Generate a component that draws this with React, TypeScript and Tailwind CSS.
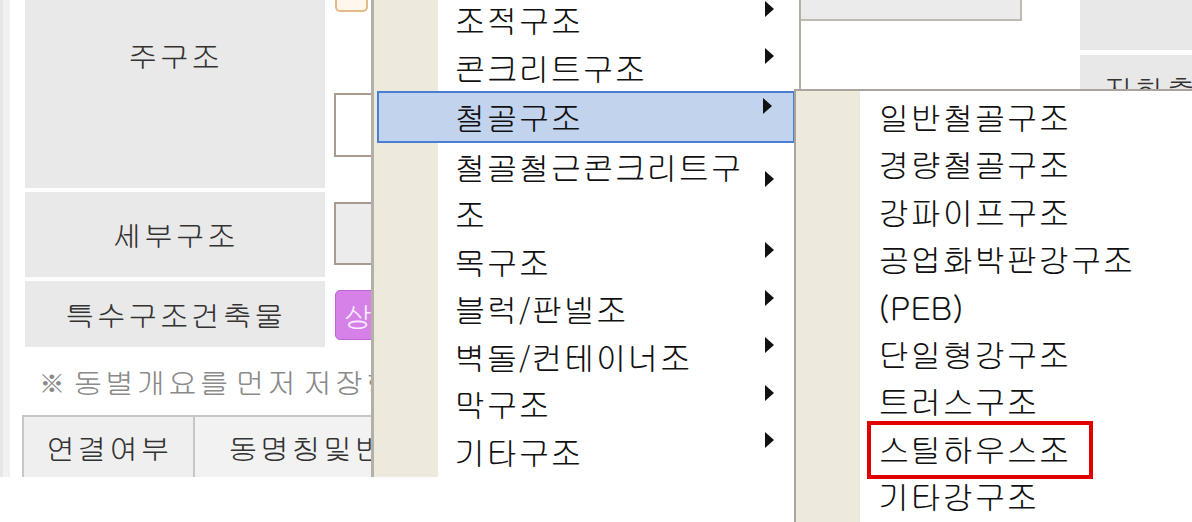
const font = "font-['Gulim','Noto_Sans_CJK_KR',sans-serif]";

const mainItems: { lines: string[]; active?: boolean }[] = [
  { lines: ['조적구조'] },
  { lines: ['콘크리트구조'] },
  { lines: ['철골구조'], active: true },
  { lines: ['철골철근콘크리트구', '조'] },
  { lines: ['목구조'] },
  { lines: ['블럭/판넬조'] },
  { lines: ['벽돌/컨테이너조'] },
  { lines: ['막구조'] },
  { lines: ['기타구조'] },
];

const subItems: { lines: string[]; marked?: boolean }[] = [
  { lines: ['일반철골구조'] },
  { lines: ['경량철골구조'] },
  { lines: ['강파이프구조'] },
  { lines: ['공업화박판강구조', '(PEB)'] },
  { lines: ['단일형강구조'] },
  { lines: ['트러스구조'] },
  { lines: ['스틸하우스조'], marked: true },
  { lines: ['기타강구조'] },
];

function Arrow() {
  return (
    <svg width="11" height="18" viewBox="0 0 11 18" className="mb-[22px] shrink-0">
      <path d="M1 1 L10 9 L1 17 Z" fill="#111" />
    </svg>
  );
}

export default function App() {
  return (
    <div className={`relative w-[1192px] h-[522px] overflow-hidden bg-white text-[#222] ${font}`}>
      {/* Background form (screenshot area) */}
      <div className="flex h-[477px] overflow-hidden">
        <div className="w-[10px] shrink-0 bg-[#f1f1f1] border-l-[3px] border-[#e6e6e6]" />
        <div className="ml-[12px] w-[400px] flex flex-col shrink-0">
          {/* 주구조 */}
          <div className="flex h-[188px]">
            <div className="ml-[3px] w-[300px] shrink-0 bg-[#e9e9e9] text-center text-[30px] leading-[36px] tracking-[1.5px] text-[#333] pt-[37px]">
              주구조
            </div>
            <div className="ml-[9px] flex-1 flex flex-col">
              <div className="ml-[1px] w-[33px] h-[12px] border-2 border-t-0 rounded-b-[5px] border-[#e6b98c] bg-[#fff7ec]" />
              <div className="mt-[81px] h-[64px] border-2 border-[#a89c92] bg-white" />
            </div>
          </div>
          {/* 세부구조 */}
          <div className="flex h-[85px] mt-[4px]">
            <div className="ml-[3px] w-[300px] shrink-0 bg-[#e9e9e9] flex items-center justify-center text-[30px] tracking-[1.5px] text-[#333]">
              세부구조
            </div>
            <div className="ml-[9px] flex-1">
              <div className="mt-[10px] h-[63px] border-2 border-[#a89c92] bg-[#ececec]" />
            </div>
          </div>
          {/* 특수구조건축물 */}
          <div className="flex h-[66px] mt-[4px]">
            <div className="ml-[3px] w-[300px] shrink-0 bg-[#e9e9e9] flex items-center justify-center text-[30px] tracking-[1.5px] text-[#333]">
              특수구조건축물
            </div>
            <div className="ml-[10px] flex-1">
              <div className="mt-[9px] h-[50px] w-[80px] rounded-[5px] border border-[#bc66d6] bg-[#d581e8] text-[#fbeaff] text-[30px] leading-[48px] pl-[7px]">
                상
              </div>
            </div>
          </div>
          {/* note */}
          <div className="h-[68px] flex items-center pl-[15px] text-[30px] tracking-[1.5px] [word-spacing:-7px] text-[#8a8a8a] whitespace-nowrap">
            ※ 동별개요를 먼저 저장한
          </div>
          {/* table header */}
          <div className="flex h-[62px] border-2 border-b-0 border-[#c6c6c6]">
            <div className="w-[171px] shrink-0 bg-[#efefef] border-r-2 border-[#c6c6c6] flex items-center justify-center text-[30px] tracking-[1.5px] text-[#333]">
              연결여부
            </div>
            <div className="flex-1 bg-[#f2f2f2] flex items-center pl-[33px] text-[30px] tracking-[1.5px] text-[#333] whitespace-nowrap overflow-hidden">
              동명칭및번호
            </div>
          </div>
        </div>
        <div className="w-[378px] shrink-0" />
        <div className="flex-1 flex">
          <div className="w-[222px] h-[21px] bg-[#ebebeb] border-b-2 border-r-2 border-[#bdbab4]" />
          <div className="ml-[58px] flex-1 flex flex-col">
            <div className="h-[50px] bg-[#e8e8e8]" />
            <div className="mt-[5px] h-[60px] bg-[#e8e8e8] pt-[11px] pl-[23px] text-[30px] tracking-[1.5px] text-[#333] whitespace-nowrap">
              지하층
            </div>
          </div>
        </div>
      </div>

      {/* Main context menu */}
      <div className="absolute left-[371px] top-[-4px] w-[430px] h-[481px] border-l-[3px] border-r-2 border-[#b4b0a8] bg-[linear-gradient(to_right,#edeadd_64px,#ffffff_64px)] text-[32px] text-[#111]">
        {mainItems.map((item) => (
          <div
            key={item.lines.join('')}
            className={
              item.active
                ? 'flex items-center ml-[3px] mr-[4px] pl-[75px] pr-[20px] border-2 border-[#4a7ed2] bg-[#c2d3ee]'
                : 'flex items-center pl-[80px] pr-[24px]'
            }
          >
            <div className="flex-1 leading-[47.5px] whitespace-nowrap">
              {item.lines.map((l) => (
                <div key={l}>{l}</div>
              ))}
            </div>
            <Arrow />
          </div>
        ))}
      </div>

      {/* Sub menu */}
      <div className="absolute left-[794px] top-[89px] right-0 bottom-0 border-l-2 border-t-2 border-[#a9a59c] bg-[linear-gradient(to_right,#edeadd_64px,#ffffff_64px)] pt-[2px] text-[32px] text-[#111]">
        {subItems.map((item) => (
          <div key={item.lines.join('')} className="relative pl-[82px] leading-[47.4px] whitespace-nowrap">
            {item.lines.map((l) => (
              <div key={l}>{l}</div>
            ))}
            {item.marked && (
              <div className="absolute left-[71px] top-[-4px] w-[226px] h-[58px] border-4 border-[#e00000]" />
            )}
          </div>
        ))}
      </div>
    </div>
  );
}
